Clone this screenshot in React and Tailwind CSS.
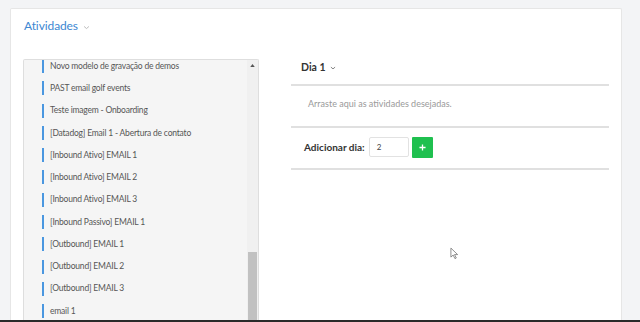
import React from "react";

const activities = [
  "Novo modelo de gravação de demos",
  "PAST email golf events",
  "Teste imagem - Onboarding",
  "[Datadog] Email 1 - Abertura de contato",
  "[Inbound Ativo] EMAIL 1",
  "[Inbound Ativo] EMAIL 2",
  "[Inbound Ativo] EMAIL 3",
  "[Inbound Passivo] EMAIL 1",
  "[Outbound] EMAIL 1",
  "[Outbound] EMAIL 2",
  "[Outbound] EMAIL 3",
  "email 1",
];

const Chevron = ({ className }) => (
  <svg viewBox="0 0 10 6" className={className} fill="none">
    <path d="M1.5 1.5 5 4.5 8.5 1.5" stroke="currentColor" strokeWidth="1.2" />
  </svg>
);

const ActivityItem = ({ label }) => (
  <div className="h-[22.27px] flex items-center pl-[18px]">
    <span className="w-[2px] h-[14px] bg-[#4a97e0]" />
    <span className="ml-[6px] text-[8.5px] tracking-[-0.2px] text-[#555] whitespace-nowrap">{label}</span>
  </div>
);

export default function App() {
  return (
    <div
      className="relative w-[640px] h-[322px] overflow-hidden bg-[#f3f4f6] flex flex-col"
      style={{ fontFamily: "Lato, 'Open Sans', sans-serif" }}
    >
      <div className="flex-1 min-h-0 pl-[10px] pr-[18px] pt-[8px]">
        <div className="h-full bg-white border border-[#e6e6e6] border-b-0 rounded-t-[2px] pl-[12px] pr-[12px] pt-[8px] overflow-hidden">
          {/* Title */}
          <div className="flex items-center gap-[5px] h-[18px] pl-[1px]">
            <h2 className="text-[12px] tracking-[-0.1px] text-[#3d87d2]">Atividades</h2>
            <Chevron className="w-[7px] h-[5px] text-[#b0b0b0] mt-[2px]" />
          </div>

          <div className="mt-[24px] flex gap-[32px]">
            {/* Activities list */}
            <div className="w-[236px] h-[300px] bg-[#f5f5f5] border border-[#dedede] border-b-0 rounded-t-[2px] flex overflow-hidden">
              <div className="flex-1 -mt-[5px]">
                {activities.map((a) => (
                  <ActivityItem key={a} label={a} />
                ))}
              </div>
              <div className="w-[11px] bg-[#f0f0f0] flex flex-col items-center">
                <svg viewBox="0 0 6 4" className="w-[5px] h-[3px] mt-[4px] text-[#555]">
                  <path d="M0 4 3 0 6 4Z" fill="currentColor" />
                </svg>
                <div className="mt-[185px] w-[9px] flex-1 bg-[#c1c1c1]" />
              </div>
            </div>

            {/* Day column */}
            <div className="flex-1 -mt-[1px]">
              <div className="h-[28px] pb-[7px] pl-[10px] flex items-center gap-[4px] border-b-2 border-[#e0e0e0]">
                <span className="text-[10.5px] font-bold text-[#333]">Dia 1</span>
                <Chevron className="w-[6px] h-[4px] text-[#555]" />
              </div>
              <div className="h-[42px] pb-[4px] pl-[17px] flex items-center border-b-2 border-[#e0e0e0]">
                <span className="text-[9px] text-[#9a9a9a]">Arraste aqui as atividades desejadas.</span>
              </div>
              <div className="h-[42px] pb-[2px] pl-[13px] flex items-center border-b-2 border-[#e0e0e0]">
                <span className="text-[10px] font-bold text-[#333]">Adicionar dia:</span>
                <div className="ml-[4px] w-[40px] h-[20px] border border-[#e2e2e2] rounded-[2px] flex items-center pl-[7px] text-[8px] text-[#444]">
                  2
                </div>
                <button className="ml-[3px] w-[21px] h-[21px] bg-[#1fc04f] rounded-[1px] flex items-center justify-center">
                  <svg viewBox="0 0 8 8" className="w-[7px] h-[7px]">
                    <path d="M4 0.5v7M0.5 4h7" stroke="white" strokeWidth="1.5" />
                  </svg>
                </button>
              </div>
            </div>
          </div>
        </div>
      </div>
      <div className="h-[2px] bg-[#2a2a2a]" />

      {/* mouse cursor */}
      <svg viewBox="0 0 10 14" className="absolute left-[450px] top-[247px] w-[9px] h-[13px]">
        <path d="M1 1v10l2.5-2.3 2 4 1.5-.7-2-3.8H8.5Z" fill="white" stroke="#666" strokeWidth="0.8" />
      </svg>
    </div>
  );
}
